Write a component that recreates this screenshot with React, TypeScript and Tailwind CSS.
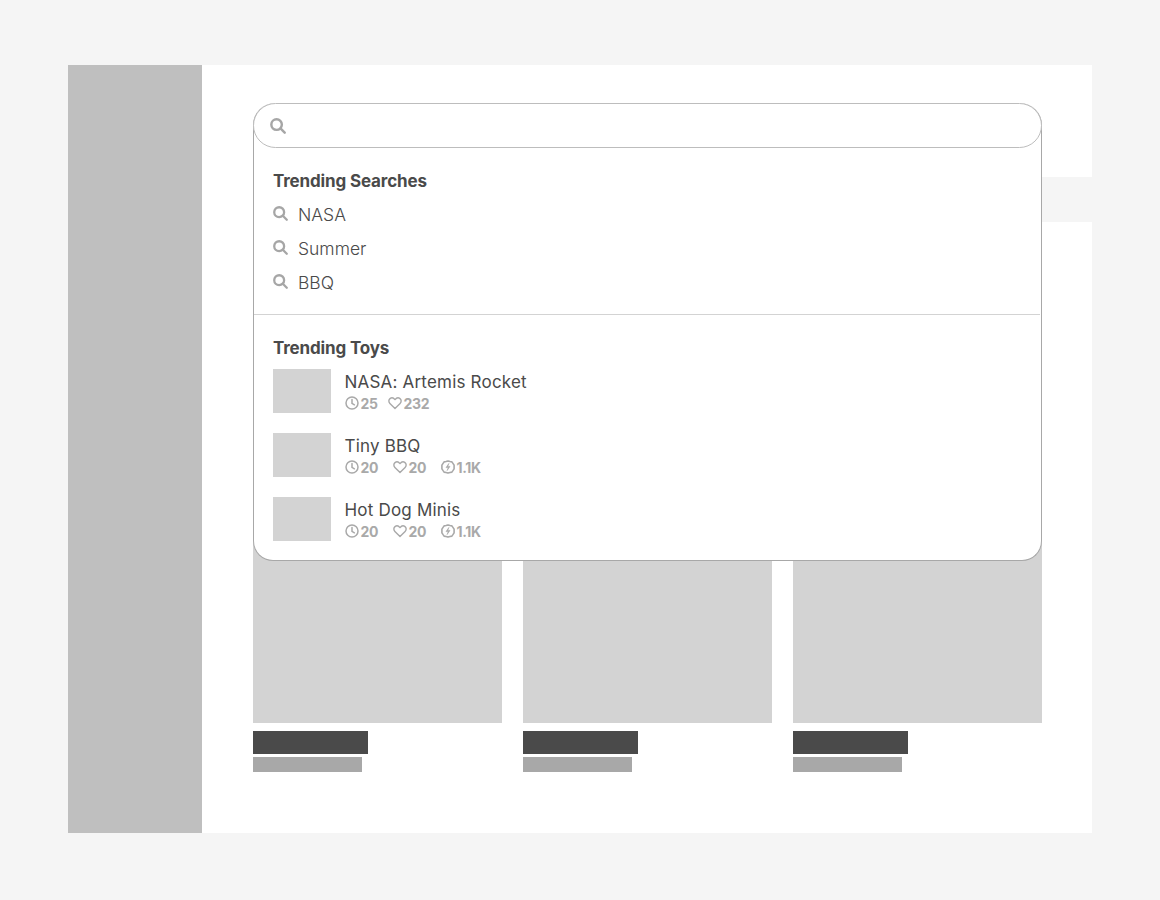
import React from 'react';

const font = "font-['Inter','Noto_Sans',sans-serif]";

const SearchIcon = ({ className }: { className?: string }) => (
  <svg viewBox="0 0 17 17" fill="none" stroke="currentColor" strokeWidth="2.6" strokeLinecap="round" className={className}>
    <circle cx="7" cy="7" r="5.6" />
    <path d="M11.4 11.4 15.6 15.6" />
  </svg>
);

const ClockIcon = () => (
  <svg viewBox="0 0 14 14" fill="none" stroke="currentColor" strokeWidth="1.5" strokeLinecap="round" strokeLinejoin="round" className="w-[14px] h-[14px] shrink-0">
    <circle cx="7" cy="7" r="6" />
    <path d="M7 3.6V7.4L9.4 8.8" />
  </svg>
);

const HeartIcon = () => (
  <svg viewBox="0 0 14 14" fill="none" stroke="currentColor" strokeWidth="1.4" strokeLinejoin="round" className="w-[14px] h-[14px] shrink-0">
    <path d="M7 12.6 1.9 7.4C.4 5.9.6 3.7 2 2.6c1.4-1.1 3.5-.9 5 1 1.5-1.9 3.6-2.1 5-1 1.4 1.1 1.6 3.3.1 4.8L7 12.6Z" />
  </svg>
);

const BoltIcon = () => (
  <svg viewBox="0 0 14 14" fill="none" stroke="currentColor" strokeWidth="1.6" strokeLinejoin="round" className="w-[14px] h-[14px] shrink-0">
    <path d="M7 .9 9 1.5 10.9 1.9 12.1 3.6 13.1 5.2 13.1 7 13.1 8.8 12.1 10.4 10.9 12.1 9 12.5 7 13.1 5 12.5 3.1 12.1 1.9 10.4.9 8.8.9 7 .9 5.2 1.9 3.6 3.1 1.9 5 1.5Z" />
    <path d="M7.9 3.4 5 7.6H7.2L6.1 10.6 9 6.4H6.8Z" fill="currentColor" strokeWidth="0.6" />
  </svg>
);

const searches = ['NASA', 'Summer', 'BBQ'];

const toys = [
  { name: 'NASA: Artemis Rocket', time: '25', likes: '232', sold: null },
  { name: 'Tiny BBQ', time: '20', likes: '20', sold: '1.1K' },
  { name: 'Hot Dog Minis', time: '20', likes: '20', sold: '1.1K' },
];

const ToyRow = ({ name, time, likes, sold }: { name: string; time: string; likes: string; sold: string | null }) => (
  <div className="flex h-[44px] gap-[13.5px]">
    <div className="w-[58px] h-[44px] bg-[#d3d3d3]" />
    <div className="flex flex-col">
      <div className="text-[17px] leading-[24px] h-[25px] pt-px tracking-[0.2px] text-[#4a4a4a]">{name}</div>
      <div className="flex items-center h-[18px] text-[14px] font-bold tracking-[-0.3px] text-[#a9a9a9]">
        <span className={`flex items-center gap-[2px] ${sold ? 'w-[48px]' : 'w-[43px]'}`}><ClockIcon />{time}</span>
        <span className="flex items-center gap-[2px] w-[48px]"><HeartIcon />{likes}</span>
        {sold && <span className="flex items-center gap-[2px]"><BoltIcon />{sold}</span>}
      </div>
    </div>
  </div>
);

const Card = () => (
  <div>
    <div className="h-[249px] bg-[#d3d3d3]" />
    <div className="mt-2 w-[115px] h-[23px] bg-[#4a4a4a]" />
    <div className="mt-[3px] w-[109px] h-[15px] bg-[#a8a8a8]" />
  </div>
);

export default function App() {
  return (
    <div className={`min-h-[900px] bg-[#f5f5f5] px-[68px] pt-[65px] ${font}`}>
      <div className="flex h-[768px]">
        <div className="w-[134px] shrink-0 bg-[#bfbfbf]" />
        <div className="relative flex-1 bg-white pt-[112px]">
          <div className="h-[45px] ml-[51px] bg-[#f5f5f5]" />
          <div className="mt-[252px] pl-[51px] pr-[50px] grid grid-cols-[249px_249px_249px] gap-x-[21px]">
            <Card />
            <Card />
            <Card />
          </div>

          <div className="absolute left-[51px] top-[38px] w-[789px] h-[458px] bg-white border border-[#a8a8a8] border-t-0 rounded-t-[22px] rounded-b-[20px]">
            <div className="-mx-px flex items-center h-[45px] rounded-full border border-[#bdbdbd] bg-white pl-[16px]">
              <SearchIcon className="w-[16px] h-[16px] text-[#a6a6a6]" />
            </div>
            <div className="pl-[19px] pt-[21px]">
              <h3 className="text-[17px] leading-[24px] font-bold tracking-[-0.15px] text-[#4a4a4a]">Trending Searches</h3>
              <ul className="mt-[5px]">
                {searches.map((s) => (
                  <li key={s} className="flex items-center h-[34px] gap-[10px] text-[17.5px] font-light text-[#4a4a4a]">
                    <SearchIcon className="w-[15px] h-[15px] -mt-[3px] text-[#a6a6a6]" />
                    <span className="pt-px">{s}</span>
                  </li>
                ))}
              </ul>
            </div>
            <div className="mt-[14px] mr-px h-px bg-[#d3d3d3]" />
            <div className="pl-[19px] pt-[21px]">
              <h3 className="text-[17px] leading-[24px] font-bold tracking-[-0.15px] text-[#4a4a4a]">Trending Toys</h3>
              <div className="mt-[9px] flex flex-col gap-[20px]">
                {toys.map((t) => (
                  <ToyRow key={t.name} {...t} />
                ))}
              </div>
            </div>
          </div>
        </div>
      </div>
    </div>
  );
}
